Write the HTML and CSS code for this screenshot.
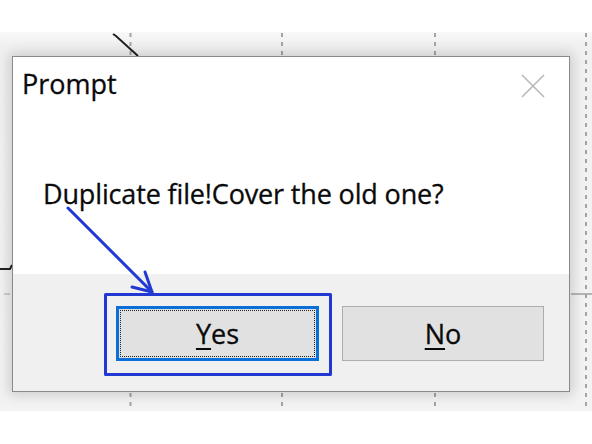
FILE: index.html
```html
<!DOCTYPE html>
<html>
<head>
<meta charset="utf-8">
<link rel="stylesheet" href="styles.css">
</head>
<body>
<div class="band">
  <svg class="backdrop" viewBox="0 32 592 379" width="592" height="379">
    <g stroke="#a4a4a4" stroke-width="2" stroke-dasharray="4 5">
      <line x1="130.5" y1="33" x2="130.5" y2="406"/>
      <line x1="282" y1="33" x2="282" y2="406"/>
      <line x1="435" y1="33" x2="435" y2="406"/>
      <line x1="586" y1="33" x2="586" y2="406"/>
    </g>
    <path d="M113 34 L116 36 L138 56" fill="none" stroke="#222" stroke-width="2"/>
    <path d="M0 269 L10 269 L12 265" fill="none" stroke="#222" stroke-width="2"/>
    <line x1="4" y1="294" x2="10" y2="294" stroke="#c0c0c0" stroke-width="1.5"/>
    <line x1="571" y1="294" x2="592" y2="294" stroke="#a0a0a0" stroke-width="1.5"/>
  </svg>
  <div class="dialog">
    <div class="main">
      <div class="titlebar">
        <span class="title">Prompt</span>
        <svg class="close" viewBox="0 0 24 24" width="24" height="24">
          <path d="M1 1 L23 23 M23 1 L1 23" stroke="#b8b8b8" stroke-width="1.6" fill="none"/>
        </svg>
      </div>
      <p class="message">Duplicate file!Cover the old one?</p>
    </div>
    <div class="footer">
      <button class="btn btn-default"><span class="focus"><u>Y</u>es</span></button>
      <button class="btn"><u>N</u>o</button>
    </div>
  </div>
</div>
<svg class="annotation" viewBox="0 0 592 444" width="592" height="444">
  <g stroke="#2238d2" stroke-width="3" fill="none" stroke-linecap="round" stroke-linejoin="round">
    <path d="M68 208 L152 292"/>
    <path d="M132 287 L152 292 L145 272"/>
    <rect x="105.5" y="294.5" width="225" height="80"/>
  </g>
</svg>
</body>
</html>
```
FILE: styles.css
```css
* { box-sizing: border-box; }
html, body { margin: 0; padding: 0; }
body {
  width: 592px;
  height: 444px;
  background: #fff;
  position: relative;
  overflow: hidden;
  font-family: "Open Sans", "Noto Sans", sans-serif;
  color: #111;
}
.band {
  position: relative;
  margin-top: 32px;
  height: 379px;
  padding: 24px 0 0 12px;
  background: linear-gradient(#f8f8f8, #f1f1f1 12px, #f3f3f3);
}
.backdrop {
  position: absolute;
  top: 0;
  left: 0;
}
.dialog {
  position: relative;
  width: 558px;
  height: 336px;
  border: 1px solid #8a8a8a;
  background: #fff;
  display: flex;
  flex-direction: column;
  box-shadow: 0 0 12px 3px rgba(0, 0, 0, 0.16);
}
.main {
  height: 217px;
  padding: 9px 0 0 9px;
}
.titlebar {
  display: flex;
  justify-content: space-between;
  align-items: flex-start;
}
.title {
  font-size: 27px;
  line-height: 36px;
  color: #0a0a0a;
  -webkit-text-stroke: 0.3px #0a0a0a;
}
.close {
  margin: 8px 24px 0 0;
  display: block;
}
.message {
  margin: 74px 0 0 21px;
  font-size: 27px;
  line-height: 36px;
  letter-spacing: -0.15px;
  color: #0a0a0a;
  -webkit-text-stroke: 0.3px #0a0a0a;
}
.footer {
  flex: 1;
  background: #f0f0f0;
  display: flex;
  justify-content: flex-end;
  align-items: flex-start;
  gap: 23px;
  padding: 32px 25px 0 0;
}
.btn {
  width: 202px;
  height: 55px;
  border: 1px solid #adadad;
  background: #e1e1e1;
  font-family: "Open Sans", "Noto Sans", sans-serif;
  font-size: 27px;
  color: #0a0a0a;
  -webkit-text-stroke: 0.3px #0a0a0a;
  padding: 0;
  display: flex;
  align-items: center;
  justify-content: center;
}
.btn-default {
  width: 203px;
  border: 3px solid #0a6fd6;
  padding: 1px;
}
.focus {
  flex: 1;
  align-self: stretch;
  border: 1px dotted #222;
  display: flex;
  align-items: center;
  justify-content: center;
}
.btn u {
  text-decoration-thickness: 2px;
  text-underline-offset: 4px;
}
.annotation {
  position: absolute;
  top: 0;
  left: 0;
  pointer-events: none;
}
```
